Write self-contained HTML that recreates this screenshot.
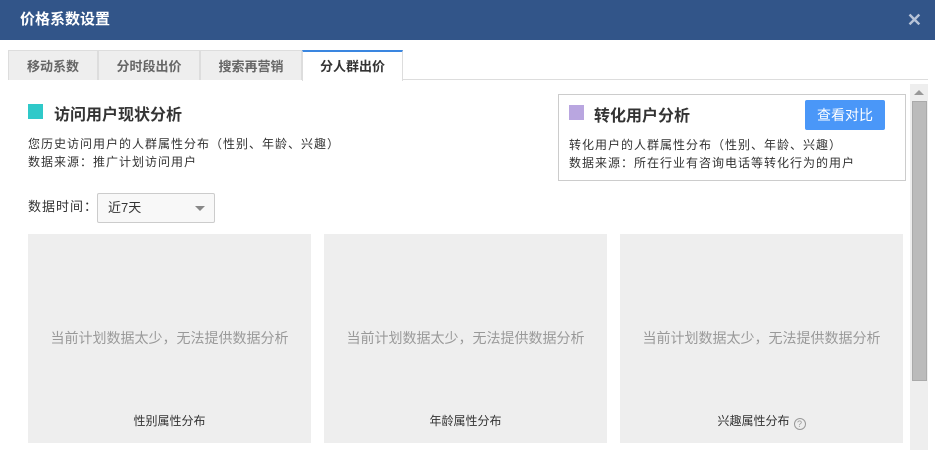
<!DOCTYPE html>
<html><head><meta charset="utf-8"><style>
*{margin:0;padding:0;box-sizing:border-box}
body{width:935px;height:450px;overflow:hidden;background:#fff;font-family:"Liberation Sans","Noto Sans CJK SC",sans-serif;position:relative;color:#333}
.hd{position:absolute;left:0;top:0;width:935px;height:40px;background:#325589;color:#fff;font-size:15px;font-weight:bold;line-height:40px;padding-left:20px}
.x{position:absolute;right:13px;top:0;color:#b8c4d8;font-size:18px;font-weight:bold}
.tabline{position:absolute;left:8px;top:79px;width:920px;height:1px;background:#ddd}
.tab{position:absolute;top:50px;height:30px;background:#eee;border:1px solid #ddd;border-bottom:none;font-size:13px;font-weight:bold;color:#666;text-align:center;line-height:32px}
.tab.a{background:#fff;border-top:2px solid #3a86e0;color:#333;height:31px;line-height:30px}
.sq{position:absolute;width:15px;height:15px}
.t1{position:absolute;font-size:16px;font-weight:bold;color:#333}
.p{position:absolute;font-size:12px;line-height:18px;color:#333;letter-spacing:1px}
.box{position:absolute;left:558px;top:94px;width:348px;height:87px;border:1px solid #ccc}
.btn{position:absolute;left:805px;top:100px;width:80px;height:30px;background:#4a97f8;color:#fff;font-size:14px;text-align:center;line-height:30px;border-radius:2px}
.sel{position:absolute;left:97px;top:193px;width:118px;height:30px;border:1px solid #ccc;border-radius:2px;background:#f8f8f8;font-size:13px;line-height:28px;padding-left:10px}
.sel:after{content:"";position:absolute;right:9px;top:12px;border:5px solid transparent;border-top-color:#888}
.pn{position:absolute;top:234px;width:283px;height:209px;background:#eee}
.pn .m{position:absolute;top:94px;width:100%;text-align:center;color:#999;font-size:14px}
.pn .l{position:absolute;top:178px;width:100%;text-align:center;color:#333;font-size:12px}
.q{display:inline-block;width:12px;height:12px;border:1px solid #999;border-radius:50%;font-size:9px;line-height:10px;color:#999;vertical-align:-2px;margin-left:4px}
.sb{position:absolute;left:910px;top:84px;width:18px;height:366px;background:#eee}
.th{position:absolute;left:912px;top:101px;width:15px;height:280px;background:#bbb;border:1px solid #aaa}
.up{position:absolute;left:914px;top:90px;border:5px solid transparent;border-bottom-color:#999;border-top:none}
</style></head><body>
<div class="hd">价格系数设置<span class="x">✕</span></div>
<div class="tabline"></div>
<div class="tab" style="left:8px;width:90px">移动系数</div>
<div class="tab" style="left:98px;width:102px">分时段出价</div>
<div class="tab" style="left:200px;width:102px">搜索再营销</div>
<div class="tab a" style="left:302px;width:101px">分人群出价</div>
<div class="sq" style="left:28px;top:104px;background:#2fc9c9"></div>
<div class="t1" style="left:54px;top:101px">访问用户现状分析</div>
<div class="p" style="left:28px;top:135px">您历史访问用户的人群属性分布（性别、年龄、兴趣）<br>数据来源：推广计划访问用户</div>
<div class="box"></div>
<div class="sq" style="left:569px;top:105px;background:#b9a6e0"></div>
<div class="t1" style="left:594px;top:102px">转化用户分析</div>
<div class="btn">查看对比</div>
<div class="p" style="left:569px;top:136px">转化用户的人群属性分布（性别、年龄、兴趣）<br>数据来源：所在行业有咨询电话等转化行为的用户</div>
<div class="p" style="left:28px;top:198px;font-size:13px">数据时间：</div>
<div class="sel">近7天</div>
<div class="pn" style="left:28px"><div class="m">当前计划数据太少，无法提供数据分析</div><div class="l">性别属性分布</div></div>
<div class="pn" style="left:324px"><div class="m">当前计划数据太少，无法提供数据分析</div><div class="l">年龄属性分布</div></div>
<div class="pn" style="left:620px"><div class="m">当前计划数据太少，无法提供数据分析</div><div class="l">兴趣属性分布<span class="q">?</span></div></div>
<div class="sb"></div><div class="th"></div><div class="up"></div>
</body></html>
